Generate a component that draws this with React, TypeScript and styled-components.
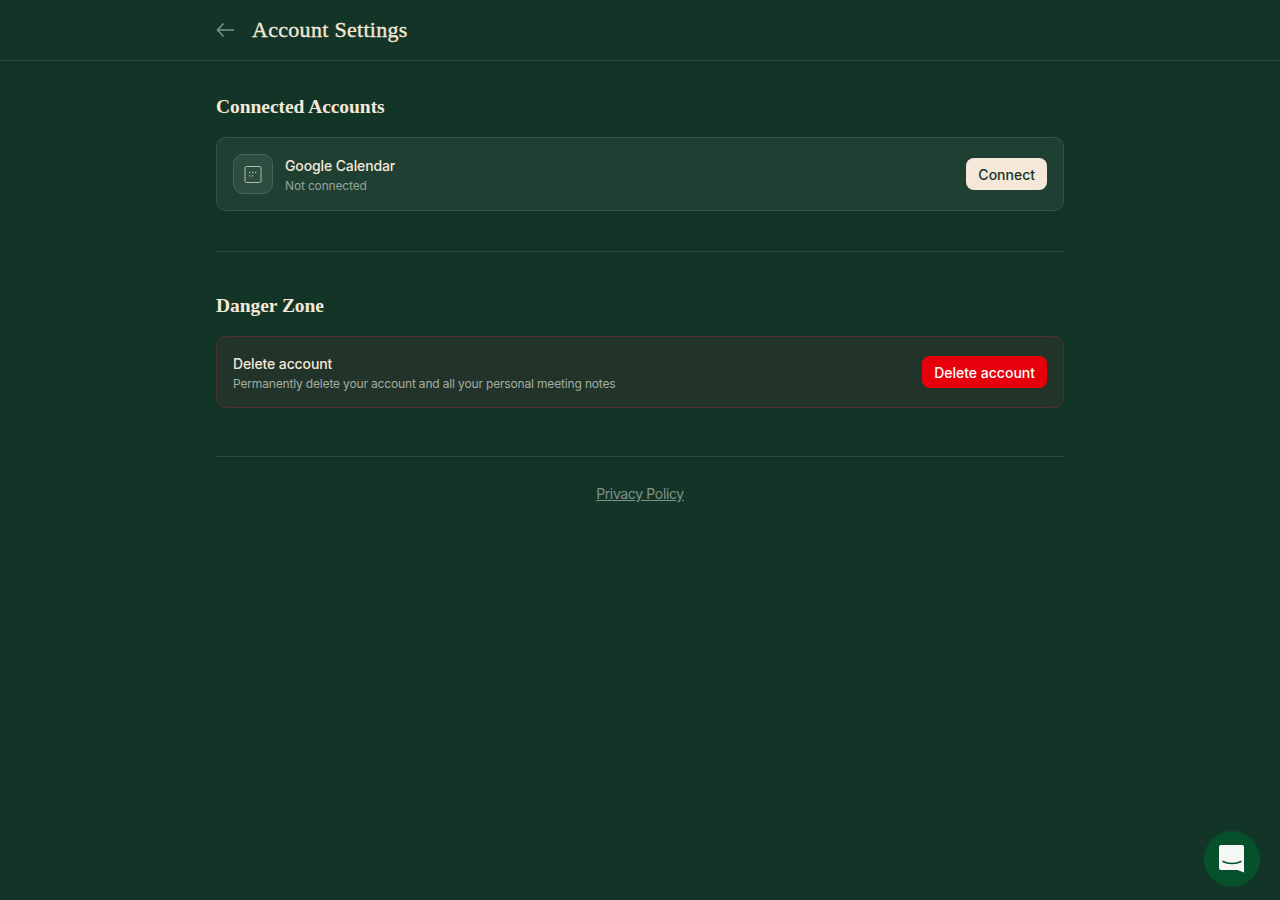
import React from "react";
import styled, { createGlobalStyle } from "styled-components";

const GlobalStyle = createGlobalStyle`
  html, body {
    margin: 0;
    padding: 0;
    height: 100%;
    background: #133528;
  }
  body {
    font-family: Inter, "Liberation Sans", sans-serif;
    color: #f5e8d8;
  }
`;

const Page = styled.div`
  min-height: 900px;
  background: #133528;
`;

const Header = styled.header`
  height: 60px;
  border-bottom: 1px solid #2a4a3e;
`;

const HeaderInner = styled.div`
  width: 848px;
  height: 100%;
  margin: 0 auto;
  display: flex;
  align-items: center;
  gap: 16px;
`;

const BackButton = styled.button`
  width: 20px;
  height: 20px;
  padding: 0;
  border: 0;
  background: none;
  color: #7e9288;
  display: flex;
  align-items: center;
  justify-content: center;
`;

const Title = styled.h1`
  margin: 0;
  font-family: "Liberation Serif", serif;
  font-size: 22px;
  line-height: 28px;
  font-weight: 400;
  letter-spacing: 0.3px;
  -webkit-text-stroke: 0.35px #f5e8d8;
  color: #f5e8d8;
`;

const Main = styled.main`
  width: 848px;
  margin: 0 auto;
  padding-top: 32px;
`;

const Section = styled.section`
  padding-bottom: 40px;
  border-bottom: 1px solid #2a4a3e;
  margin-bottom: 40px;

  &:last-of-type {
    padding-bottom: 48px;
    margin-bottom: 24px;
  }
`;

const SectionTitle = styled.h2`
  margin: 0 0 16px;
  font-family: "Liberation Serif", serif;
  font-size: 19.5px;
  line-height: 28px;
  font-weight: 700;
  letter-spacing: -0.05px;
  color: #f5e8d8;
`;

const Card = styled.div<{ $danger?: boolean }>`
  box-sizing: border-box;
  display: flex;
  align-items: center;
  justify-content: space-between;
  padding: 16px;
  border-radius: 10px;
  border: 1px solid ${(p) => (p.$danger ? "#4f3029" : "#34544a")};
  background: ${(p) => (p.$danger ? "#22342a" : "#203f33")};
`;

const CardLeft = styled.div`
  display: flex;
  align-items: center;
  gap: 12px;
`;

const IconTile = styled.div`
  box-sizing: border-box;
  width: 40px;
  height: 40px;
  border-radius: 10px;
  border: 1px solid #48655b;
  background: #2e4d41;
  color: #b0bcae;
  display: flex;
  align-items: center;
  justify-content: center;
`;

const CardText = styled.div`
  display: flex;
  flex-direction: column;
  transform: translateY(1px);
`;

const CardName = styled.div`
  font-size: 14px;
  line-height: 20px;
  font-weight: 500;
  letter-spacing: -0.12px;
  color: #f5e8d8;
`;

const CardHint = styled.div<{ $muted?: boolean }>`
  font-size: 12px;
  line-height: 16px;
  margin-top: 2px;
  letter-spacing: -0.16px;
  color: ${(p) => (p.$muted ? "#93a397" : "#a3aea1")};
`;

const ActionButton = styled.button<{ $danger?: boolean }>`
  height: 32px;
  padding: 0 12px;
  border: 0;
  border-radius: 8px;
  font-family: inherit;
  font-size: 14px;
  font-weight: 450;
  background: ${(p) => (p.$danger ? "#e7000b" : "#f5e8d8")};
  color: ${(p) => (p.$danger ? "#ffffff" : "#14352a")};
`;

const Footer = styled.footer`
  text-align: center;
`;

const PolicyLink = styled.a`
  font-size: 14px;
  line-height: 26px;
  letter-spacing: -0.35px;
  color: #7e9288;
  text-decoration: underline;
`;

const ChatBubble = styled.button`
  position: fixed;
  right: 20px;
  bottom: 13px;
  width: 56px;
  height: 56px;
  padding: 0;
  border: 0;
  border-radius: 50%;
  background: #07502c;
  display: flex;
  align-items: center;
  justify-content: center;
`;

const BackGlyph = () => (
  <svg width="20" height="20" viewBox="0 0 20 20" fill="none" stroke="currentColor" strokeWidth="1.5">
    <path d="M7.5 3.5 1.5 10l6 6.5M1.5 10H18" />
  </svg>
);

const CalendarGlyph = () => (
  <svg width="18" height="18" viewBox="0 0 18 18" fill="none">
    <rect x="1" y="1.5" width="16" height="16" rx="1.5" stroke="currentColor" strokeWidth="1" />
    <path d="M5 7.5h1.3M8 7.5h1.3M11 7.5h1.3M5 10.8h1.3M8 10.8h1.3" stroke="currentColor" strokeWidth="1.3" />
  </svg>
);

const ChatGlyph = () => (
  <svg width="28" height="28" viewBox="0 0 28 28">
    <path d="M3 0h21a2 2 0 0 1 2 2v25.5l-6.5-2.5H3a2 2 0 0 1-2-2V2a2 2 0 0 1 2-2z" fill="#f6f8f6" />
    <path d="M5 16.5c5 2.6 13 2.6 18 0" fill="none" stroke="#07502c" strokeWidth="1.5" strokeLinecap="round" />
  </svg>
);

export default function App() {
  return (
    <Page>
      <GlobalStyle />
      <Header>
        <HeaderInner>
          <BackButton aria-label="Back">
            <BackGlyph />
          </BackButton>
          <Title>Account Settings</Title>
        </HeaderInner>
      </Header>
      <Main>
        <Section>
          <SectionTitle>Connected Accounts</SectionTitle>
          <Card>
            <CardLeft>
              <IconTile>
                <CalendarGlyph />
              </IconTile>
              <CardText>
                <CardName>Google Calendar</CardName>
                <CardHint $muted>Not connected</CardHint>
              </CardText>
            </CardLeft>
            <ActionButton>Connect</ActionButton>
          </Card>
        </Section>
        <Section>
          <SectionTitle>Danger Zone</SectionTitle>
          <Card $danger>
            <CardText>
              <CardName>Delete account</CardName>
              <CardHint>Permanently delete your account and all your personal meeting notes</CardHint>
            </CardText>
            <ActionButton $danger>Delete account</ActionButton>
          </Card>
        </Section>
        <Footer>
          <PolicyLink href="#">Privacy Policy</PolicyLink>
        </Footer>
      </Main>
      <ChatBubble aria-label="Chat">
        <ChatGlyph />
      </ChatBubble>
    </Page>
  );
}
